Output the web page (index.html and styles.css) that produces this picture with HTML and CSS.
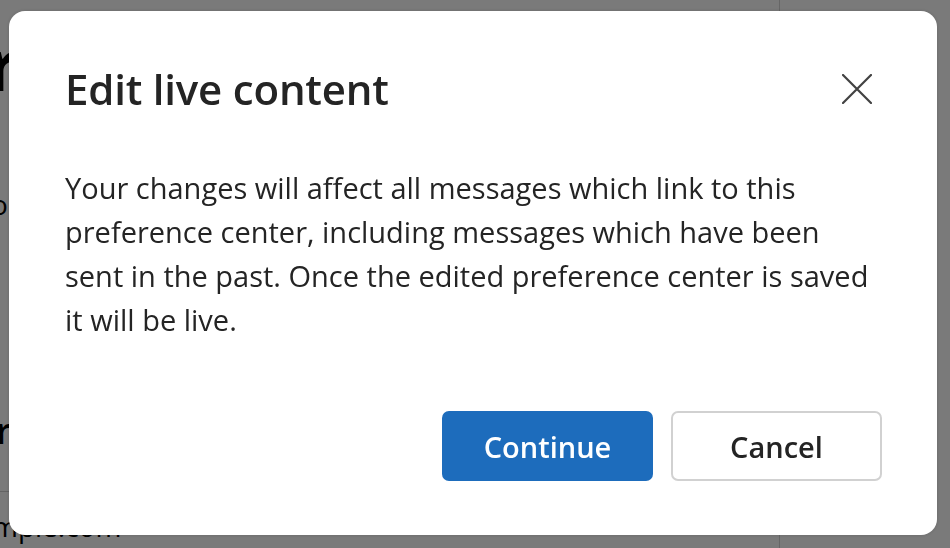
FILE: index.html
```html
<!DOCTYPE html>
<html lang="en">
<head>
<meta charset="utf-8">
<title>Edit live content</title>
<link rel="stylesheet" href="styles.css">
</head>
<body>
<div class="page">
  <div class="page-main">
    <div class="page-title">r</div>
    <div class="page-text page-text-o">o</div>
    <div class="page-text page-text-r">r</div>
    <div class="page-rule"></div>
    <div class="page-email">mple.com</div>
  </div>
  <div class="page-side"></div>
</div>

<div class="overlay">
  <div class="dialog" role="dialog" aria-labelledby="dlg-title">
    <div class="dialog-header">
      <h2 class="dialog-title" id="dlg-title">Edit live content</h2>
      <button class="close-btn" aria-label="Close">
        <svg width="30" height="30" viewBox="0 0 30 30" fill="none" stroke="#424242" stroke-width="2.2" stroke-linecap="round">
          <path d="M1 1 L29 29 M29 1 L1 29"/>
        </svg>
      </button>
    </div>
    <p class="dialog-body">Your changes will affect all messages which link to this<br>preference center, including messages which have been<br>sent in the past. Once the edited preference center is saved<br>it will be live.</p>
    <div class="dialog-actions">
      <button class="btn btn-primary">Continue</button>
      <button class="btn btn-secondary">Cancel</button>
    </div>
  </div>
</div>
</body>
</html>
```

FILE: styles.css
```css
html, body {
  margin: 0;
  padding: 0;
  width: 950px;
  height: 548px;
  overflow: hidden;
}

body {
  font-family: "Open Sans", "Noto Sans", sans-serif;
  color: #242424;
  background: #ffffff;
}

/* ---------- background page ---------- */
.page {
  display: flex;
  height: 548px;
  overflow: hidden;
}

.page-main {
  width: 779px;
  border-right: 1px solid #d6d6d6;
  display: flex;
  flex-direction: column;
  overflow: hidden;
}

.page-side {
  flex: 1;
}

.page-title {
  margin: 23px 0 0 -13px;
  font-size: 72px;
  font-weight: 700;
  line-height: 80px;
  color: #000;
}

.page-text {
  color: #000;
}

.page-text-o {
  margin: 81px 0 0 -9px;
  font-size: 28px;
  line-height: 40px;
}

.page-text-r {
  margin: 185px 0 0 -4px;
  font-size: 36px;
  line-height: 44px;
  font-weight: 600;
}

.page-rule {
  margin-top: 38px;
  height: 1px;
  background: #d1d1d1;
}

.page-email {
  margin: 16px 0 0 -8px;
  font-size: 28px;
  line-height: 36px;
  color: #000;
}

/* ---------- overlay + dialog ---------- */
.overlay {
  position: fixed;
  inset: 0;
  background: rgba(0, 0, 0, 0.52);
  display: flex;
  padding: 11px 13px 13px 9px;
}

.dialog {
  flex: 1;
  background: #ffffff;
  border-radius: 16px;
  padding: 50px 55px 54px 56px;
  display: flex;
  flex-direction: column;
  box-shadow: 0 0 4px rgba(0, 0, 0, 0.15);
}

.dialog-header {
  display: flex;
  align-items: center;
  justify-content: space-between;
}

.dialog-title {
  margin: 0;
  font-size: 42px;
  font-weight: 600;
  line-height: 56px;
  color: #242424;
  letter-spacing: -0.2px;
}

.close-btn {
  width: 50px;
  height: 50px;
  border: none;
  background: transparent;
  padding: 0;
  display: flex;
  align-items: center;
  justify-content: center;
}

.dialog-body {
  margin: 49px 0 0 0;
  font-size: 29px;
  line-height: 44px;
  color: #242424;
  flex: 1;
}

.dialog-actions {
  display: flex;
  justify-content: flex-end;
  gap: 18px;
}

.btn {
  width: 211px;
  height: 70px;
  border-radius: 7px;
  font-family: inherit;
  font-size: 29px;
  font-weight: 600;
  cursor: pointer;
}

.btn-primary {
  background: #1d6cbc;
  color: #ffffff;
  border: none;
}

.btn-secondary {
  background: #ffffff;
  color: #242424;
  border: 2px solid #d1d1d1;
}
```
